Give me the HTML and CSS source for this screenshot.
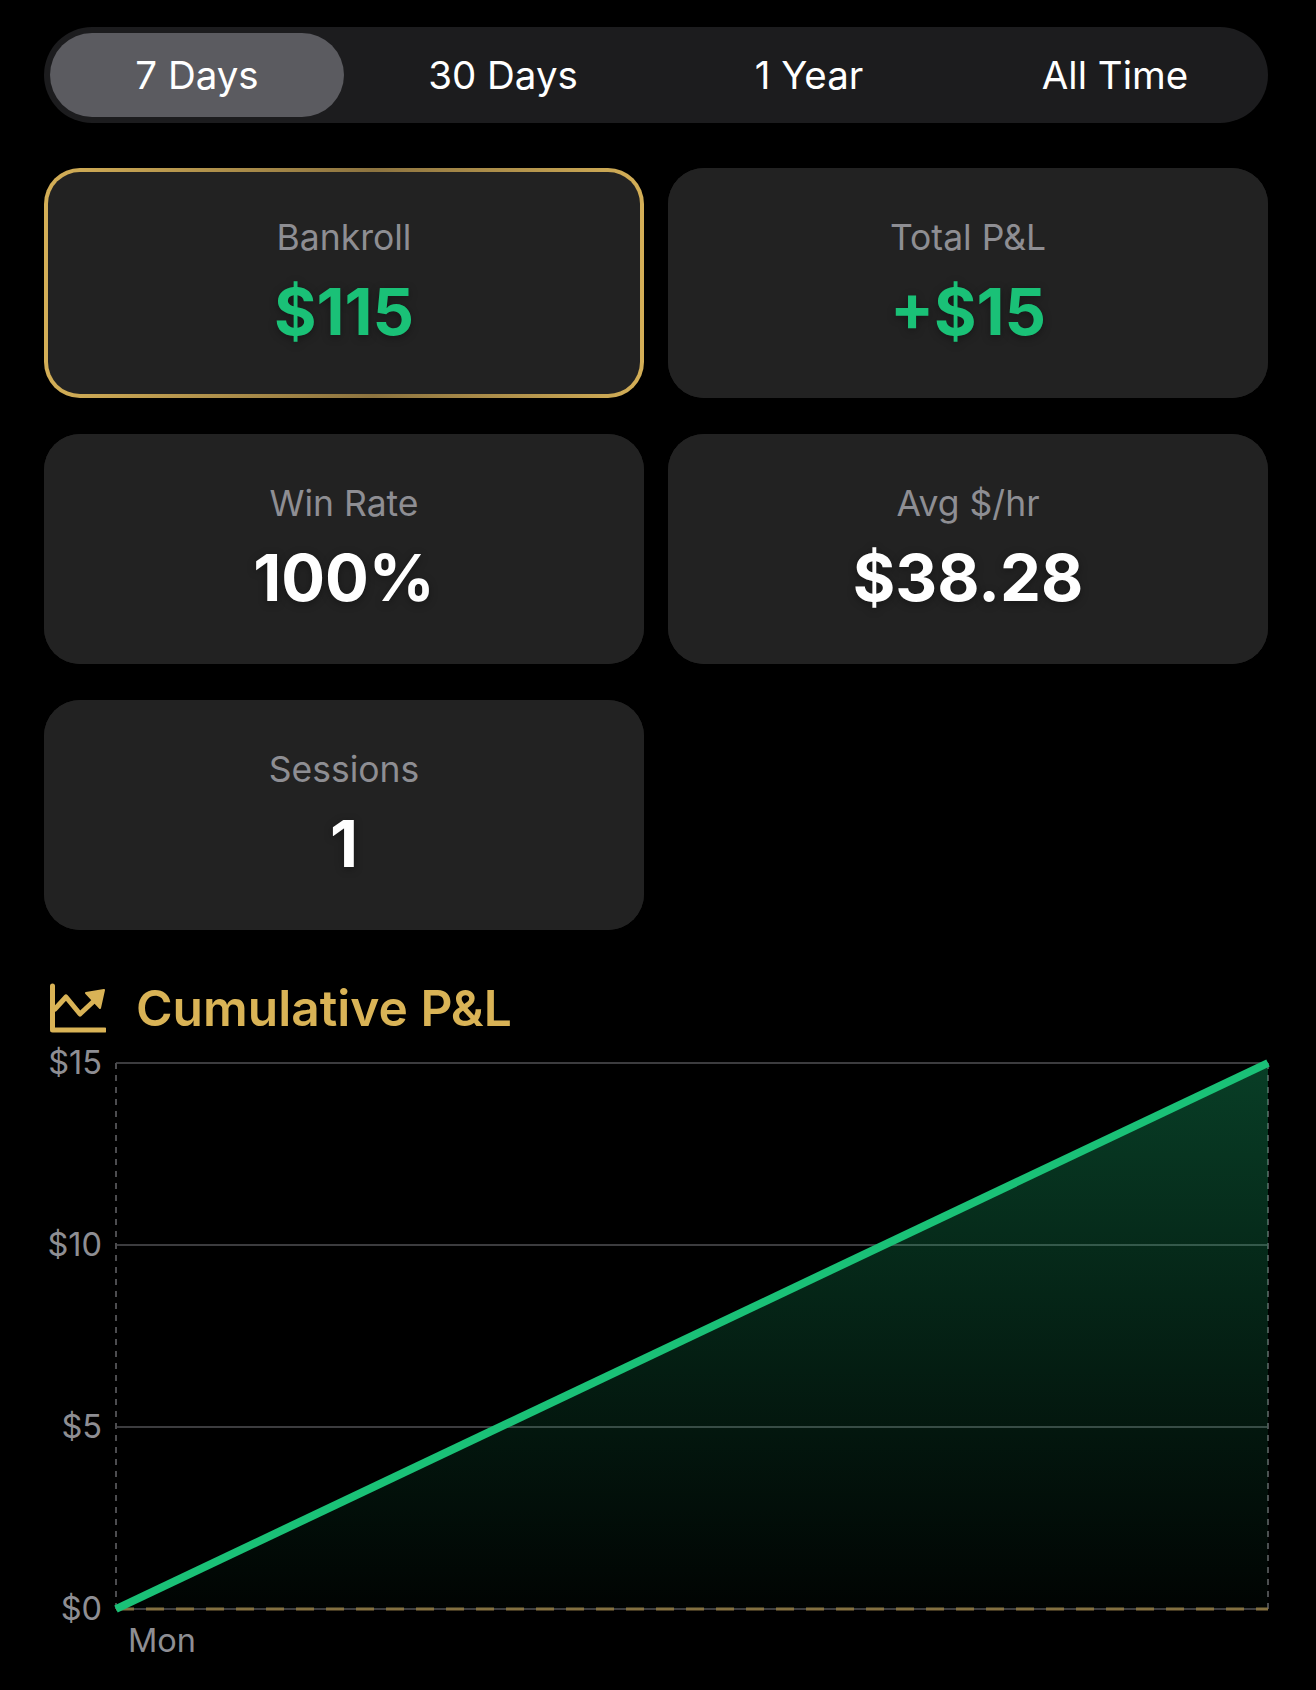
FILE: index.html
```html
<!DOCTYPE html>
<html lang="en">
<head>
    <meta charset="UTF-8">
    <meta name="viewport" content="width=device-width, initial-scale=1.0">
    <title>Stats</title>
    <link rel="stylesheet" href="styles.css">
</head>
<body>
    <main class="page">
        <nav class="tabs">
            <button class="tab tab-active">7 Days</button>
            <button class="tab">30 Days</button>
            <button class="tab">1 Year</button>
            <button class="tab">All Time</button>
        </nav>

        <section class="cards">
            <div class="card card-gold">
                <div class="card-inner">
                    <span class="card-label">Bankroll</span>
                    <span class="card-value value-green">$115</span>
                </div>
            </div>
            <div class="card">
                <div class="card-inner">
                    <span class="card-label">Total P&amp;L</span>
                    <span class="card-value value-green">+$15</span>
                </div>
            </div>
            <div class="card">
                <div class="card-inner">
                    <span class="card-label">Win Rate</span>
                    <span class="card-value">100%</span>
                </div>
            </div>
            <div class="card">
                <div class="card-inner">
                    <span class="card-label">Avg $/hr</span>
                    <span class="card-value">$38.28</span>
                </div>
            </div>
            <div class="card">
                <div class="card-inner">
                    <span class="card-label">Sessions</span>
                    <span class="card-value">1</span>
                </div>
            </div>
        </section>

        <section class="chart-section">
            <h2 class="chart-title">
                <svg class="chart-icon" viewBox="0 0 58 52" aria-hidden="true">
                    <path d="M4.5 4v44h52" fill="none" stroke="#d9b356" stroke-width="5" stroke-linecap="round" stroke-linejoin="round"/>
                    <path d="M7 27l11-12 14 17 15-14" fill="none" stroke="#d9b356" stroke-width="5" stroke-linecap="round" stroke-linejoin="round"/>
                    <path d="M38 11l18-3-4 18z" fill="#d9b356" stroke="#d9b356" stroke-width="2" stroke-linejoin="round"/>
                </svg>
                <span>Cumulative P&amp;L</span>
            </h2>

            <svg class="chart" viewBox="0 0 1224 640">
                <defs>
                    <linearGradient id="areaFill" x1="0" y1="0" x2="0" y2="1">
                        <stop offset="0" stop-color="#1ac177" stop-opacity="0.32"/>
                        <stop offset="1" stop-color="#1ac177" stop-opacity="0.02"/>
                    </linearGradient>
                </defs>

                <path class="grid-line" d="M72 13H1224M72 195H1224M72 377H1224M72 559H1224"/>
                <path class="grid-dash" d="M72 13V559M1224 13V559"/>
                <path class="base-dash" d="M72 559H1224"/>

                <polygon points="72,559 1224,13 1224,559" fill="url(#areaFill)"/>
                <line class="pnl-line" x1="72" y1="559" x2="1224" y2="13"/>

                <text class="axis-text" x="58" y="24" text-anchor="end">$15</text>
                <text class="axis-text" x="58" y="206" text-anchor="end">$10</text>
                <text class="axis-text" x="58" y="388" text-anchor="end">$5</text>
                <text class="axis-text" x="58" y="570" text-anchor="end">$0</text>
                <text class="axis-text" x="84" y="602">Mon</text>
            </svg>
        </section>
    </main>
</body>
</html>
```

FILE: styles.css
```css
body {
    margin: 0;
    background-color: #000;
    color: #fff;
    font-family: 'Inter', 'Liberation Sans', sans-serif;
}

.page {
    box-sizing: border-box;
    height: 1690px;
    overflow: hidden;
    padding: 27px 48px 0 44px;
}

.tabs {
    display: grid;
    grid-template-columns: repeat(4, 1fr);
    gap: 12px;
    height: 96px;
    box-sizing: border-box;
    padding: 6px;
    background-color: #1c1c1e;
    border-radius: 48px;
}

.tab {
    border: 0;
    background: none;
    color: #fff;
    font-family: inherit;
    font-size: 38.5px;
    font-weight: 400;
    border-radius: 42px;
}

.tab-active {
    background-color: #5b5b60;
}

.cards {
    display: grid;
    grid-template-columns: 1fr 1fr;
    column-gap: 24px;
    row-gap: 36px;
    margin-top: 45px;
}

.card {
    height: 230px;
    border-radius: 36px;
    background-color: #222;
}

.card-inner {
    display: flex;
    flex-direction: column;
    align-items: center;
    justify-content: center;
    gap: 14px;
    height: 100%;
    box-sizing: border-box;
    border-radius: inherit;
    background-color: #222;
}

.card-gold {
    padding: 4px;
    box-sizing: border-box;
    background: linear-gradient(90deg, #d4af57 0%, #8d7440 55%, #d4af57 100%);
}

.card-gold .card-inner {
    border-radius: 32px;
}

.card-label {
    color: #8e8e93;
    font-size: 35.5px;
    line-height: 44px;
}

.card-value {
    font-size: 65px;
    font-weight: 700;
    line-height: 76px;
    text-shadow: 0 2px 8px rgba(0, 0, 0, 0.35);
}

.value-green {
    color: #1ac177;
}

.chart-section {
    margin-top: 52px;
}

.chart-title {
    display: flex;
    align-items: center;
    gap: 30px;
    height: 52px;
    margin: 0 0 16px;
    padding-left: 4px;
    color: #d9b356;
    font-size: 49.7px;
    font-weight: 600;
}

.chart-icon {
    width: 58px;
    height: 52px;
}

.chart {
    display: block;
    width: 1224px;
    height: 640px;
    overflow: visible;
}

.grid-line {
    fill: none;
    stroke: #3c3c3f;
    stroke-width: 2;
}

.grid-dash {
    fill: none;
    stroke: #4c4c4f;
    stroke-width: 2;
    stroke-dasharray: 6 6;
}

.base-dash {
    fill: none;
    stroke: #857040;
    stroke-width: 3;
    stroke-dasharray: 18 12;
}

.pnl-line {
    stroke: #1ac177;
    stroke-width: 8;
}

.axis-text {
    fill: #8e8e93;
    font-size: 32.5px;
}
```
